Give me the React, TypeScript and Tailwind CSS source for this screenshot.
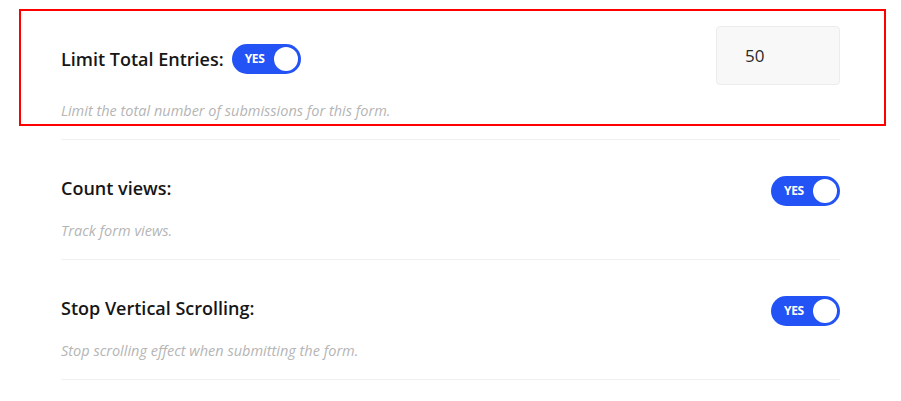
import React from "react";

function Toggle() {
  return (
    <div className="relative flex h-[30px] w-[69px] shrink-0 items-center rounded-full bg-[#2353f5]">
      <span className="pl-[13px] text-[12px] font-bold tracking-tight text-white" style={{ fontFamily: '"Open Sans", sans-serif' }}>
        YES
      </span>
      <span className="absolute right-[3px] top-[3px] h-[24px] w-[24px] rounded-full bg-white" />
    </div>
  );
}

const labelCls = "text-[18px] leading-6 font-semibold text-[#161616]";
const descCls = "text-[14.5px] leading-5 italic text-[#b5b5b5]";

export default function App() {
  return (
    <div className="relative h-[401px] w-[901px] bg-white" style={{ fontFamily: '"Open Sans", sans-serif' }}>
      <div className="ml-[61px] w-[779px]">
        {/* Row 1 */}
        <div className="border-b border-[#f0f0f0] pt-[26px] pb-[18px]">
          <div className="flex items-start justify-between">
            <div className="mt-[18px] flex items-center gap-2">
              <span className={labelCls}>Limit Total Entries:</span>
              <Toggle />
            </div>
            <div className="flex h-[59px] w-[124px] items-center rounded-[4px] border border-[#ececec] bg-[#f8f8f8] pl-[28px] text-[17px] text-[#2a2a2a]">
              50
            </div>
          </div>
          <div className={`mt-[16px] ${descCls}`}>Limit the total number of submissions for this form.</div>
        </div>
        {/* Row 2 */}
        <div className="border-b border-[#f0f0f0] pt-[36px] pb-[18px]">
          <div className="flex items-start justify-between">
            <span className={labelCls}>Count views:</span>
            <Toggle />
          </div>
          <div className={`mt-[15px] ${descCls}`}>Track form views.</div>
        </div>
        {/* Row 3 */}
        <div className="border-b border-[#f0f0f0] pt-[36px] pb-[18px]">
          <div className="flex items-start justify-between">
            <span className={labelCls}>Stop Vertical Scrolling:</span>
            <Toggle />
          </div>
          <div className={`mt-[15px] ${descCls}`}>Stop scrolling effect when submitting the form.</div>
        </div>
      </div>
      <div className="pointer-events-none absolute left-[19px] top-[9px] h-[117px] w-[867px] border-2 border-[#ff0000]" />
    </div>
  );
}
